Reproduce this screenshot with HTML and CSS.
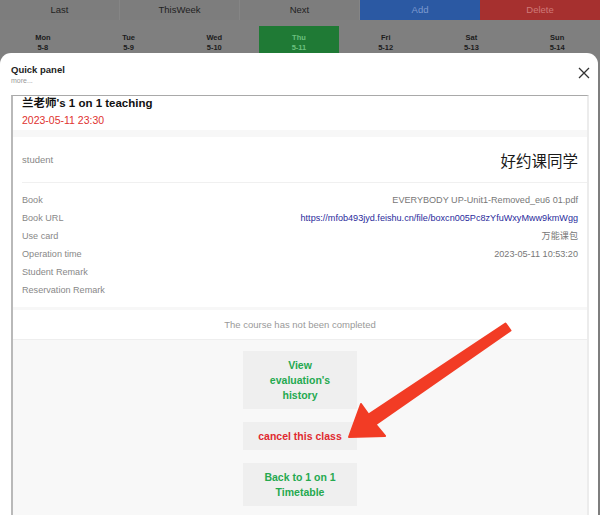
FILE: index.html
```html
<!DOCTYPE html>
<html lang="zh-CN">
<head>
    <meta charset="UTF-8">
    <title>Quick panel</title>
    <link rel="stylesheet" href="styles.css">
</head>
<body>
    <div class="toolbar">
        <div class="tool-btn">Last</div>
        <div class="tool-btn">ThisWeek</div>
        <div class="tool-btn">Next</div>
        <div class="tool-btn add">Add</div>
        <div class="tool-btn delete">Delete</div>
    </div>

    <div class="week-row">
        <div class="day"><b>Mon</b><b>5-8</b></div>
        <div class="day"><b>Tue</b><b>5-9</b></div>
        <div class="day"><b>Wed</b><b>5-10</b></div>
        <div class="day today"><b>Thu</b><b>5-11</b></div>
        <div class="day"><b>Fri</b><b>5-12</b></div>
        <div class="day"><b>Sat</b><b>5-13</b></div>
        <div class="day"><b>Sun</b><b>5-14</b></div>
    </div>

    <!-- 快捷面板 -->
    <div class="modal">
        <div class="modal-header">
            <div class="modal-title">Quick panel</div>
            <div class="modal-more">more...</div>
            <span class="close-modal">
                <svg width="12" height="12" viewBox="0 0 12 12"><path d="M1 1L11 11M11 1L1 11" stroke="#333" stroke-width="1.3" fill="none"/></svg>
            </span>
        </div>

        <div class="card">
            <div class="card-head">
                <div class="lesson-title">兰老师's 1 on 1 teaching</div>
                <div class="lesson-time">2023-05-11 23:30</div>
            </div>
            <div class="band"></div>

            <div class="student-row">
                <span class="student-label">student</span>
                <span class="student-name">好约课同学</span>
            </div>

            <div class="details">
                <div class="detail-row"><span>Book</span><span class="value">EVERYBODY UP-Unit1-Removed_eu6 01.pdf</span></div>
                <div class="detail-row"><span>Book URL</span><span class="value link">https://mfob493jyd.feishu.cn/file/boxcn005Pc8zYfuWxyMww9kmWgg</span></div>
                <div class="detail-row"><span>Use card</span><span class="value">万能课包</span></div>
                <div class="detail-row"><span>Operation time</span><span class="value">2023-05-11 10:53:20</span></div>
                <div class="detail-row"><span>Student Remark</span><span class="value"></span></div>
                <div class="detail-row"><span>Reservation Remark</span><span class="value"></span></div>
            </div>
            <div class="band thin"></div>

            <div class="status">The course has not been completed</div>

            <div class="actions">
                <div class="action-btn">View<br>evaluation's<br>history</div>
                <div class="action-btn danger">cancel this class</div>
                <div class="action-btn">Back to 1 on 1<br>Timetable</div>
            </div>
        </div>

        <svg class="arrow" width="600" height="515" viewBox="0 0 600 515">
            <polygon points="349,437 361,404 368.5,414.5 505.5,323.5 510.5,330.5 375.5,424.5 385,436" fill="#f23c25" stroke="#f23c25" stroke-width="2" stroke-linejoin="round"/>
        </svg>
    </div>
</body>
</html>
```

FILE: styles.css
```css
* {
    margin: 0;
    padding: 0;
    box-sizing: border-box;
}

body {
    width: 600px;
    height: 515px;
    overflow: hidden;
    font-family: "Liberation Sans", "Noto Sans CJK SC", Arial, sans-serif;
    background: #7e7e7e;
    color: #222;
    position: relative;
}

.toolbar {
    display: grid;
    grid-template-columns: repeat(5, 1fr);
    height: 20px;
    background: #7d7d7d;
}

.tool-btn {
    font-size: 9.5px;
    line-height: 20px;
    text-align: center;
    color: #1f1f1f;
    border-right: 1px solid #858585;
}

.tool-btn.add {
    background: #2b59a3;
    color: #7d9ad0;
    border-right: none;
}

.tool-btn.delete {
    background: #a6302f;
    color: #cf7a78;
    border-right: none;
}

.week-row {
    display: grid;
    grid-template-columns: repeat(7, 1fr);
    padding-top: 6px;
    height: 60px;
    background: #7f7f7f;
}

.day {
    display: flex;
    flex-direction: column;
    align-items: center;
    padding-top: 7px;
    margin: 0 2px;
    font-size: 7.5px;
    line-height: 10px;
    color: #1c1c1c;
}

.day.today {
    background: #1f7a35;
    color: #6cc07f;
    margin: 0 4px 0 2px;
}

.modal {
    position: absolute;
    top: 53px;
    left: 0;
    width: 598px;
    bottom: 0;
    background: #fff;
    border-radius: 11px 11px 0 0;
}

.modal-header {
    position: relative;
    padding: 11px 11px 0;
    height: 42px;
}

.modal-title {
    font-size: 9.5px;
    font-weight: bold;
    line-height: 12px;
    color: #222;
}

.modal-more {
    font-size: 7px;
    line-height: 9px;
    color: #999;
}

.close-modal {
    position: absolute;
    right: 8px;
    top: 14px;
    width: 12px;
    height: 12px;
}

.close-modal svg {
    display: block;
}

.card {
    margin-left: 11px;
    width: 578px;
    border-top: 1px solid #a9a9a9;
    border-left: 2px solid #b9b9b9;
    border-right: 2px solid #ececec;
    height: 420px;
}

.card-head {
    padding: 0 9px 3px;
}

.lesson-title {
    font-size: 11.5px;
    font-weight: bold;
    line-height: 14px;
    color: #111;
}

.lesson-time {
    margin-top: 3px;
    font-size: 10.5px;
    line-height: 14px;
    color: #e0322f;
}

.band {
    height: 7px;
    background: #f7f7f7;
}

.band.thin {
    height: 3px;
}

.student-row {
    display: flex;
    justify-content: space-between;
    align-items: center;
    height: 46px;
    margin-left: 9px;
    padding-right: 9px;
    border-bottom: 1px solid #f0f0f0;
}

.student-label {
    font-size: 9.5px;
    color: #888;
}

.student-name {
    font-size: 15.5px;
    color: #1a1a1a;
}

.details {
    padding: 8px 9px;
}

.detail-row {
    display: flex;
    justify-content: space-between;
    height: 18px;
    line-height: 18px;
    font-size: 9.1px;
    color: #888;
}

.detail-row .value {
    color: #777;
}

.detail-row .link {
    color: #2a2b9c;
}

.status {
    height: 30px;
    line-height: 30px;
    text-align: center;
    font-size: 9.5px;
    color: #999;
    border-bottom: 1px solid #eeeeee;
}

.actions {
    display: flex;
    flex-direction: column;
    align-items: center;
    gap: 13px;
    padding-top: 11px;
    background: #f8f8f8;
    height: 200px;
}

.action-btn {
    width: 114px;
    padding: 7px 4px 6px;
    background: #efefef;
    text-align: center;
    font-size: 10.5px;
    font-weight: bold;
    line-height: 15px;
    color: #25a94f;
}

.action-btn.danger {
    color: #e02a2f;
}

.arrow {
    position: absolute;
    top: -53px;
    left: 0;
    pointer-events: none;
}
```
